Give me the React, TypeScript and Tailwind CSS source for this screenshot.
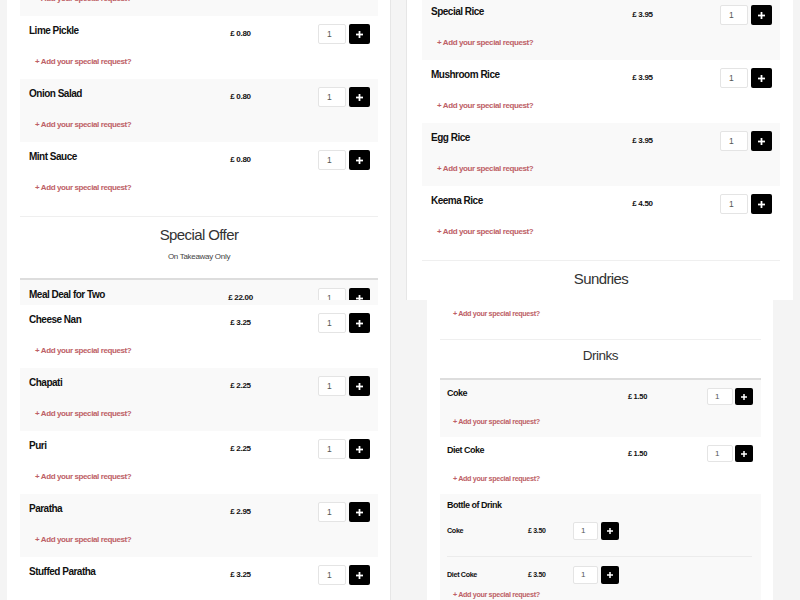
import React from "react";

const Plus = ({ s = 7 }: { s?: number }) => (
  <svg width={s} height={s} viewBox="0 0 8 8" fill="white">
    <rect x="3" y="0" width="2" height="8" />
    <rect x="0" y="3" width="8" height="2" />
  </svg>
);

const Qty = () => (
  <div className="flex ml-[37px]">
    <div className="w-[28px] h-[20px] border border-[#e4e4e4] rounded-[2px] bg-white text-[8.5px] text-[#555] pl-[8px] flex items-center">1</div>
    <div className="ml-[3px] w-[21px] h-[20px] bg-black rounded-[2px] flex items-center justify-center">
      <Plus s={7} />
    </div>
  </div>
);

const SmallQty = ({ w = 26, gap = 2 }: { w?: number; gap?: number }) => (
  <div className="flex">
    <div
      className={`${w === 26 ? "w-[26px] h-[17px]" : "w-[25px] h-[18px]"} border border-[#e4e4e4] rounded-[2px] bg-white text-[8px] text-[#555] pl-[7px] flex items-center`}
    >
      1
    </div>
    <div
      className={`${gap === 2 ? "ml-[2px] h-[17px]" : "ml-[3px] h-[18px]"} w-[18px] bg-black rounded-[2px] flex items-center justify-center`}
    >
      <Plus s={6} />
    </div>
  </div>
);

const Request = () => (
  <div className="pl-[15px] mt-[13px] text-[8px] tracking-[-0.4px] font-bold text-[#bd6066] leading-[10px] whitespace-nowrap">
    + Add your special request?
  </div>
);

const Row = ({ name, price, gray }: { name: string; price: string; gray?: boolean }) => (
  <div className={`h-[63px] shrink-0 pt-[8px] ${gray ? "bg-[#f9f9f9]" : "bg-white"}`}>
    <div className="flex items-start h-[20px]">
      <div className="w-[180px] pl-[9px] text-[10px] tracking-[-0.5px] font-bold leading-[13px] text-[#111] whitespace-nowrap">{name}</div>
      <div className="w-[81px] h-[20px] flex items-center justify-center text-[8px] tracking-[-0.3px] font-bold text-[#111] whitespace-nowrap">{price}</div>
      <Qty />
    </div>
    <Request />
  </div>
);

const SmallRow = ({ name, price, gray }: { name: string; price: string; gray?: boolean }) => (
  <div className={`h-[57px] shrink-0 pt-[8px] ${gray ? "bg-[#f9f9f9]" : "bg-white"}`}>
    <div className="flex items-start h-[17px]">
      <div className="w-[160px] pl-[7px] text-[9px] tracking-[-0.5px] font-bold leading-[11px] text-[#111] whitespace-nowrap">{name}</div>
      <div className="w-[75px] h-[17px] flex items-center justify-center text-[7.5px] tracking-[-0.3px] font-bold text-[#111] whitespace-nowrap">{price}</div>
      <div className="ml-[32px]">
        <SmallQty />
      </div>
    </div>
    <div className="pl-[13px] mt-[12px] text-[7.2px] tracking-[-0.35px] font-bold text-[#bd6066] leading-[9px] whitespace-nowrap">
      + Add your special request?
    </div>
  </div>
);

const Heading = ({ title, sub }: { title: string; sub?: string }) => (
  <div className="shrink-0">
    <div className="mt-[11px] h-px bg-[#efefef]" />
    <div className="mt-[9px] text-center text-[15px] tracking-[-0.6px] leading-[17px] text-[#333]">{title}</div>
    {sub && <div className="mt-[9px] text-center text-[8px] tracking-[-0.3px] leading-[10px] text-[#444]">{sub}</div>}
    <div className="mt-[16px] h-[2px] bg-[#dddddd]" />
  </div>
);

export default function App() {
  return (
    <div className="w-[800px] h-[600px] grid grid-cols-2 grid-rows-2 font-['Liberation_Sans',Arial,sans-serif] bg-[#f4f4f4]">
      {/* Top-left */}
      <div className="h-[300px] overflow-hidden bg-[#f4f4f4] pl-[7px] pr-[9px]">
        <div className="h-full flex flex-col bg-white pl-[13px] pr-[12px] border-r border-[#e6e6e6]">
          <div className="-mt-[47px] flex flex-col">
            <Row gray name="Mango Chutney" price="£ 0.80" />
            <Row name="Lime Pickle" price="£ 0.80" />
            <Row gray name="Onion Salad" price="£ 0.80" />
            <Row name="Mint Sauce" price="£ 0.80" />
            <Heading title="Special Offer" sub="On Takeaway Only" />
            <Row gray name="Meal Deal for Two" price="£ 22.00" />
          </div>
        </div>
      </div>

      {/* Top-right */}
      <div className="h-[300px] overflow-hidden bg-[#f4f4f4] pl-[6px] pr-[7px]">
        <div className="h-full flex flex-col bg-white pl-[15px] pr-[13px] border-l border-[#e6e6e6]">
          <div className="-mt-[3px] flex flex-col">
            <Row gray name="Special Rice" price="£ 3.95" />
            <Row name="Mushroom Rice" price="£ 3.95" />
            <Row gray name="Egg Rice" price="£ 3.95" />
            <Row name="Keema Rice" price="£ 4.50" />
            <Heading title="Sundries" />
            <Row gray name="Papadom" price="£ 0.60" />
          </div>
        </div>
      </div>

      {/* Bottom-left */}
      <div className="h-[300px] overflow-hidden bg-[#f4f4f4] pl-[7px] pr-[9px]">
        <div className="h-full flex flex-col bg-white pl-[13px] pr-[12px] border-r border-[#e6e6e6]">
          <div className="-mt-[58px] flex flex-col">
            <Row gray name="Garlic Nan" price="£ 2.95" />
            <Row name="Cheese Nan" price="£ 3.25" />
            <Row gray name="Chapati" price="£ 2.25" />
            <Row name="Puri" price="£ 2.25" />
            <Row gray name="Paratha" price="£ 2.95" />
            <Row name="Stuffed Paratha" price="£ 3.25" />
          </div>
        </div>
      </div>

      {/* Bottom-right */}
      <div className="h-[300px] overflow-hidden bg-[#f4f4f4] pl-[27px] pr-[27px]">
        <div className="h-full flex flex-col bg-white pl-[13px] pr-[12px]">
          <div className="-mt-[28px] flex flex-col">
            <SmallRow name="Chutney Tray" price="£ 1.95" />
            <div className="shrink-0">
              <div className="mt-[10px] h-px bg-[#efefef]" />
              <div className="mt-[8px] text-center text-[13.5px] tracking-[-0.5px] leading-[16px] text-[#333]">Drinks</div>
              <div className="mt-[14px] h-[2px] bg-[#dddddd]" />
            </div>
            <SmallRow gray name="Coke" price="£ 1.50" />
            <SmallRow name="Diet Coke" price="£ 1.50" />
            <div className="shrink-0 bg-[#f9f9f9] pt-[6px] pb-[10px]">
              <div className="pl-[7px] text-[9px] tracking-[-0.5px] font-bold leading-[11px] text-[#111]">Bottle of Drink</div>
              <div className="mt-[11px] flex items-center h-[18px] pl-[7px]">
                <div className="w-[81px] text-[7.2px] tracking-[-0.35px] font-bold text-[#111]">Coke</div>
                <div className="w-[45px] text-[7px] tracking-[-0.3px] font-bold text-[#111]">£ 3.50</div>
                <SmallQty w={25} gap={3} />
              </div>
              <div className="mt-[16px] ml-[7px] mr-[9px] h-px bg-[#ececec]" />
              <div className="mt-[9px] flex items-center h-[18px] pl-[7px]">
                <div className="w-[81px] text-[7.2px] tracking-[-0.35px] font-bold text-[#111]">Diet Coke</div>
                <div className="w-[45px] text-[7px] tracking-[-0.3px] font-bold text-[#111]">£ 3.50</div>
                <SmallQty w={25} gap={3} />
              </div>
              <div className="pl-[13px] mt-[6px] text-[7.2px] tracking-[-0.35px] font-bold text-[#bd6066] leading-[9px] whitespace-nowrap">
                + Add your special request?
              </div>
            </div>
          </div>
        </div>
      </div>
    </div>
  );
}
